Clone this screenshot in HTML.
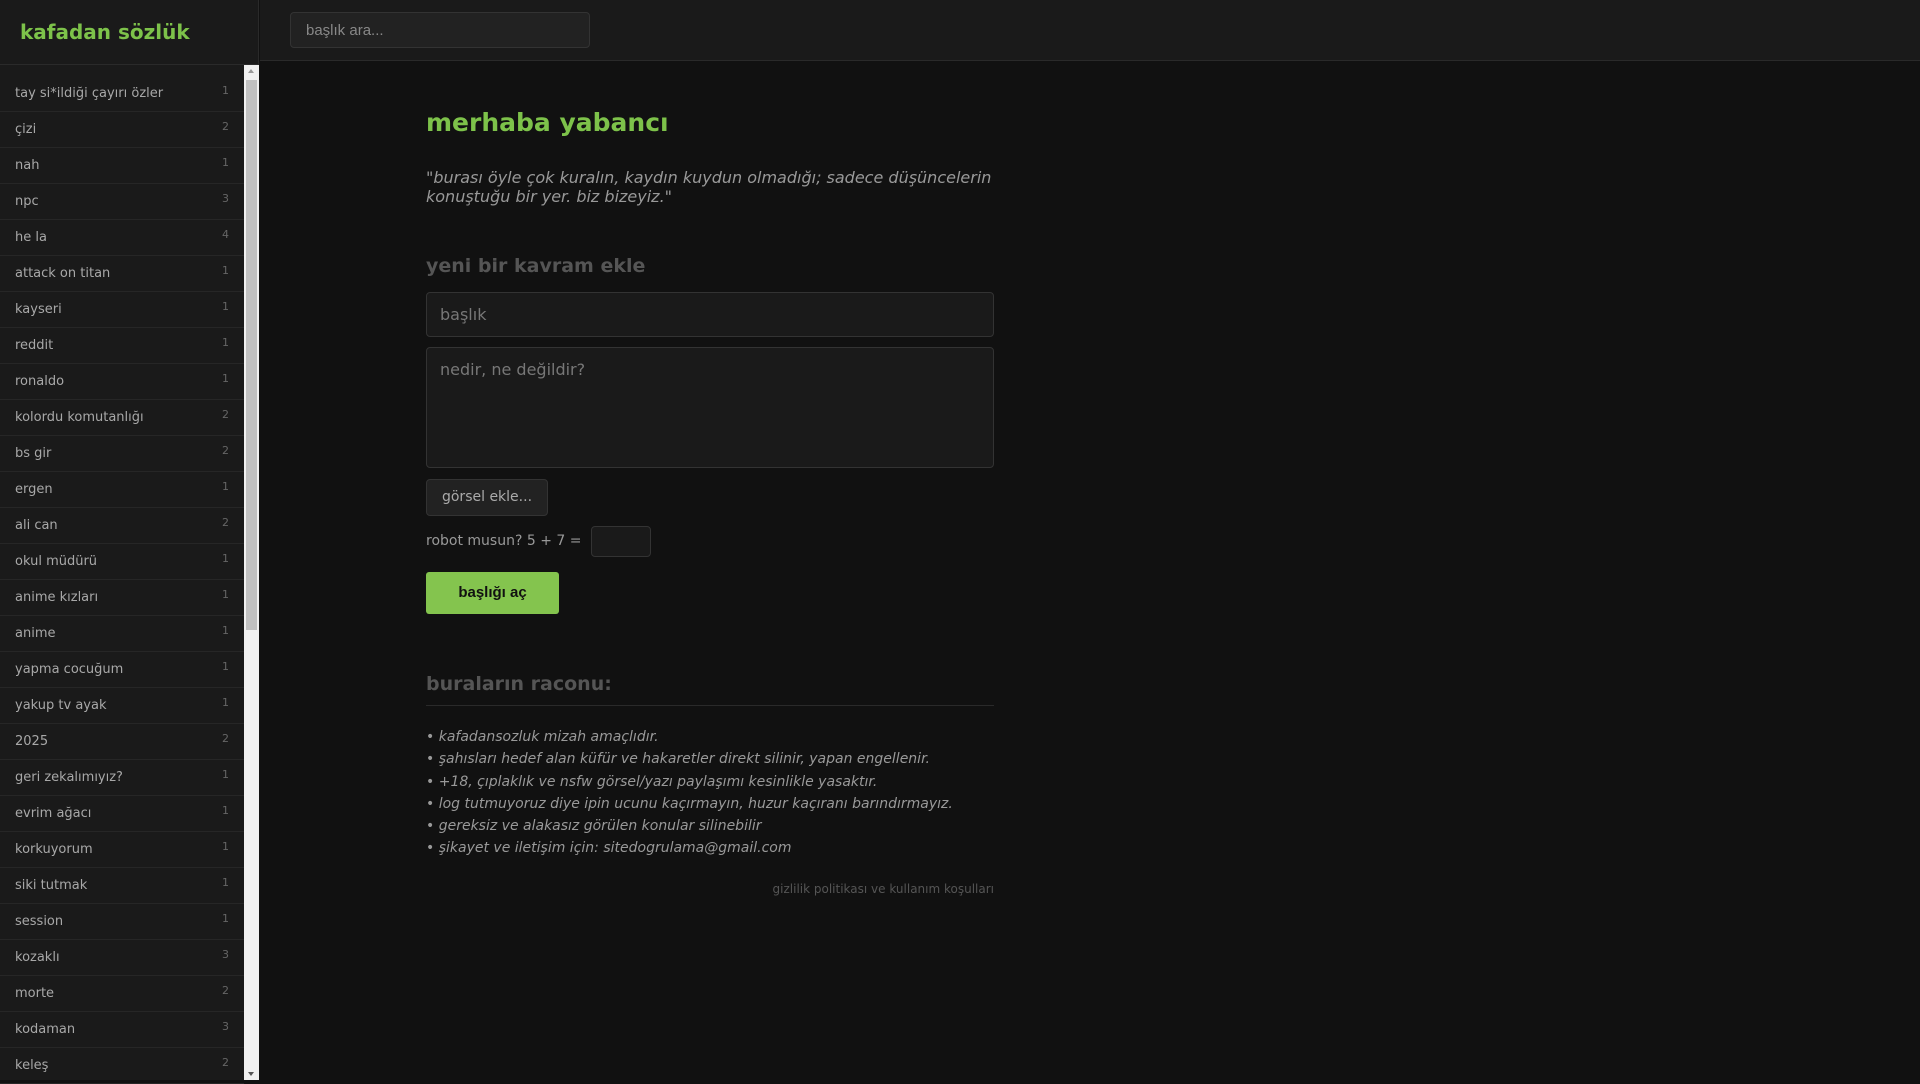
<!DOCTYPE html>
<html><head><meta charset="utf-8"><style>
*{box-sizing:border-box;margin:0;padding:0}
html,body{width:1920px;height:1080px;overflow:hidden;background:#111;font-family:"DejaVu Sans","Liberation Sans",sans-serif}
.side{position:absolute;left:0;top:0;width:259px;height:1080px;background:#1a1a1a;border-right:1px solid #2a2a2a}
.logo{height:65px;border-bottom:1px solid #2a2a2a;padding:20px 0 0 20px;color:#7dc24a;font-weight:bold;font-size:20px}
.list{position:absolute;top:76px;left:0;width:244px}
.it{height:36px;border-bottom:1px solid #262626;display:flex;justify-content:space-between;align-items:center;padding:0 15px;color:#a8a8a8;font-size:13px}
.it span{color:#666;font-size:11px;margin-top:-6px}
.sb{position:absolute;left:244px;top:65px;width:15px;height:1015px;background:#f1f1f1}
.thumb{position:absolute;left:2px;top:15px;width:11px;height:550px;background:#c1c1c1}
.top{position:absolute;left:260px;top:0;right:0;height:61px;background:#1a1a1a;border-bottom:1px solid #2a2a2a}
.search{position:absolute;left:30px;top:12px;width:300px;height:36px;border:1px solid #333;border-radius:4px;background:#222;color:#888;font:15px "Liberation Sans",sans-serif;padding:9px 15px}
.main{position:absolute;left:426px;top:0;width:568px}
h1{position:absolute;top:108px;color:#7dc24a;font-size:25px}
.q{position:absolute;top:168px;color:#999;font-style:italic;font-size:16px;line-height:19px}
h2{position:absolute;color:#555;font-size:19px}
.inp{position:absolute;left:0;width:568px;background:#1a1a1a;border:1px solid #333;border-radius:4px;color:#777;font-size:16px;padding:12px 13px}
.btn{position:absolute;top:479px;height:37px;width:122px;background:#222;border:1px solid #333;border-radius:4px;color:#aaa;font-size:14px;text-align:center;line-height:35px}
.rob{position:absolute;top:533px;color:#999;font-size:14px}
.cap{position:absolute;left:165px;top:526px;width:60px;height:31px;background:#1a1a1a;border:1px solid #333;border-radius:4px}
.go{position:absolute;top:572px;width:133px;height:42px;background:#84c44e;border-radius:3px;font:bold 15px "Liberation Sans",sans-serif;color:#111;text-align:center;line-height:42px}
.hr{position:absolute;top:705px;width:568px;border-top:1px solid #2a2a2a}
.rules{position:absolute;top:726px;color:#999;font-style:italic;font-size:14px;line-height:22.3px}
.ft{position:absolute;top:882px;right:0;color:#555;font-size:12px}
</style></head><body>
<div class="side"><div class="logo">kafadan sözlük</div>
<div class="list">
<div class="it">tay si*ildiği çayırı özler<span>1</span></div>
<div class="it">çizi<span>2</span></div>
<div class="it">nah<span>1</span></div>
<div class="it">npc<span>3</span></div>
<div class="it">he la<span>4</span></div>
<div class="it">attack on titan<span>1</span></div>
<div class="it">kayseri<span>1</span></div>
<div class="it">reddit<span>1</span></div>
<div class="it">ronaldo<span>1</span></div>
<div class="it">kolordu komutanlığı<span>2</span></div>
<div class="it">bs gir<span>2</span></div>
<div class="it">ergen<span>1</span></div>
<div class="it">ali can<span>2</span></div>
<div class="it">okul müdürü<span>1</span></div>
<div class="it">anime kızları<span>1</span></div>
<div class="it">anime<span>1</span></div>
<div class="it">yapma cocuğum<span>1</span></div>
<div class="it">yakup tv ayak<span>1</span></div>
<div class="it">2025<span>2</span></div>
<div class="it">geri zekalımıyız?<span>1</span></div>
<div class="it">evrim ağacı<span>1</span></div>
<div class="it">korkuyorum<span>1</span></div>
<div class="it">siki tutmak<span>1</span></div>
<div class="it">session<span>1</span></div>
<div class="it">kozaklı<span>3</span></div>
<div class="it">morte<span>2</span></div>
<div class="it">kodaman<span>3</span></div>
<div class="it">keleş<span>2</span></div>
</div>
<div class="sb"><div style="position:absolute;left:4px;top:4px;border:3.5px solid transparent;border-bottom:4px solid #999;border-top:0"></div><div class="thumb"></div><div style="position:absolute;left:4px;bottom:4px;border:3.5px solid transparent;border-top:4px solid #555;border-bottom:0"></div></div>
</div>
<div class="top"><div class="search">başlık ara...</div></div>
<div class="main">
<h1>merhaba yabancı</h1>
<div class="q">"burası öyle çok kuralın, kaydın kuydun olmadığı; sadece düşüncelerin konuştuğu bir yer. biz bizeyiz."</div>
<h2 style="top:255px">yeni bir kavram ekle</h2>
<div class="inp" style="top:292px;height:45px">başlık</div>
<div class="inp" style="top:347px;height:121px">nedir, ne değildir?</div>
<div class="btn">görsel ekle...</div>
<div class="rob">robot musun? 5 + 7 =</div><div class="cap"></div>
<div class="go">başlığı aç</div>
<h2 style="top:673px">buraların raconu:</h2>
<div class="hr"></div>
<div class="rules">• kafadansozluk mizah amaçlıdır.<br>• şahısları hedef alan küfür ve hakaretler direkt silinir, yapan engellenir.<br>• +18, çıplaklık ve nsfw görsel/yazı paylaşımı kesinlikle yasaktır.<br>• log tutmuyoruz diye ipin ucunu kaçırmayın, huzur kaçıranı barındırmayız.<br>• gereksiz ve alakasız görülen konular silinebilir<br>• şikayet ve iletişim için: sitedogrulama@gmail.com</div>
<div class="ft">gizlilik politikası ve kullanım koşulları</div>
</div>
</body></html>
